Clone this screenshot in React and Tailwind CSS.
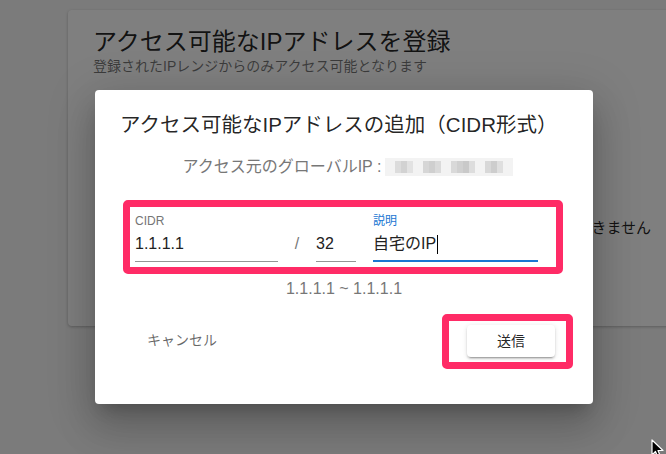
import React from "react";

const FONT = { fontFamily: '"Liberation Sans", "Noto Sans CJK JP", sans-serif' };

function Mosaic() {
  const groups = [
    ["#dcdcdc", "#d2d2d2", "#e2e2e2"],
    ["#d6d6d6", "#cfcfcf", "#dadada"],
    ["#d9d9d9", "#d0d0d0", "#c9c9c9", "#dddddd"],
    ["#d8d8d8", "#cdcdcd", "#dfdfdf"],
  ];
  return (
    <div className="flex h-[18px] items-stretch bg-[#f3f3f3] px-[10px] gap-[10px]">
      {groups.map((g, i) => (
        <div key={i} className="flex items-stretch py-[3px]">
          {g.map((c, j) => (
            <div key={j} className="w-[6px]" style={{ backgroundColor: c }} />
          ))}
        </div>
      ))}
    </div>
  );
}

export default function App() {
  return (
    <div
      className="relative w-[666px] h-[454px] overflow-hidden bg-[#f6f6f6]"
      style={FONT}
    >
      {/* background card */}
      <div className="ml-[68px] mt-[10px] w-[620px] h-[316px] bg-white rounded-[4px] shadow-[0_1px_3px_rgba(0,0,0,0.25)] pl-[25px] pt-[17px]">
        <div className="text-[24px] leading-[30px] text-black/[0.87]">
          アクセス可能なIPアドレスを登録
        </div>
        <div className="text-[14px] leading-[20px] text-black/[0.54] mt-[-1px]">
          登録されたIPレンジからのみアクセス可能となります
        </div>
        <div className="flex justify-end pr-[37px] mt-[142px] text-[15px] leading-[20px] text-black/[0.87]">
          アクセスできません
        </div>
      </div>

      {/* overlay */}
      <div className="absolute inset-0 bg-black/50" />

      {/* dialog */}
      <div className="absolute left-[95px] top-[90px] w-[498px] h-[314px] bg-white rounded-[4px] shadow-[0_11px_15px_-7px_rgba(0,0,0,0.2),0_24px_38px_3px_rgba(0,0,0,0.14),0_9px_46px_8px_rgba(0,0,0,0.12)] flex flex-col">
        <div className="pt-[19px] px-[25px] text-[20.5px] leading-[32px] text-black/[0.87] whitespace-nowrap">
          アクセス可能なIPアドレスの追加（CIDR形式）
        </div>

        <div className="mt-[14px] flex justify-center items-center h-[24px] text-[16px] text-[#777] pl-[8px]">
          <span>アクセス元のグローバルIP : </span>
          <span className="ml-[4px]">
            <Mosaic />
          </span>
        </div>

        {/* highlighted form */}
        <div className="mt-[21px] ml-[28px] w-[440px] border-[7px] border-[#ff2b66] rounded-[5px] pl-[5px] pt-[6px] pb-[5px] flex">
          <div className="w-[143px] flex flex-col">
            <div className="h-[16px] leading-[16px] text-[12px] text-[#757575]">CIDR</div>
            <div className="mt-[3px] h-[24px] leading-[24px] text-[16px] text-[#222]">1.1.1.1</div>
            <div className="h-[5px]" />
            <div className="h-[1px] bg-[#949494]" />
          </div>
          <div className="w-[38px] flex flex-col">
            <div className="h-[16px]" />
            <div className="mt-[3px] h-[24px] leading-[24px] text-[16px] text-[#777] text-center">/</div>
          </div>
          <div className="w-[40px] flex flex-col">
            <div className="h-[16px]" />
            <div className="mt-[3px] h-[24px] leading-[24px] text-[16px] text-[#222]">32</div>
            <div className="h-[5px]" />
            <div className="h-[1px] bg-[#949494]" />
          </div>
          <div className="w-[17px]" />
          <div className="w-[165px] flex flex-col">
            <div className="h-[16px] leading-[16px] text-[12px] text-[#1976d2]">説明</div>
            <div className="mt-[3px] h-[24px] leading-[24px] text-[16px] text-[#222] flex items-center">
              <span>自宅のIP</span>
              <span className="ml-[1px] w-[1px] h-[19px] bg-black" />
            </div>
            <div className="h-[4px]" />
            <div className="h-[2px] bg-[#1976d2]" />
          </div>
        </div>

        <div className="mt-[5px] h-[20px] leading-[20px] text-center text-[16px] text-[#777]">
          1.1.1.1 ~ 1.1.1.1
        </div>

        {/* actions */}
        <div className="mt-[15px] flex items-center justify-between pl-[52px] pr-[20px]">
          <span className="text-[14px] text-black/[0.6] mt-[-2px]">キャンセル</span>
          <div className="border-[7px] border-[#ff2b66] rounded-[5px] pl-[18px] pr-[11px] pt-[4px] pb-[5px]">
            <div className="w-[88px] h-[32px] rounded-[4px] bg-white flex items-center justify-center text-[14px] text-black/[0.87] shadow-[0_3px_1px_-2px_rgba(0,0,0,0.2),0_2px_2px_0_rgba(0,0,0,0.14),0_1px_5px_0_rgba(0,0,0,0.12)]">
              送信
            </div>
          </div>
        </div>
      </div>

      {/* mouse cursor */}
      <svg
        className="absolute left-[651px] top-[439px]"
        width="14"
        height="20"
        viewBox="0 0 14 20"
      >
        <path
          d="M1 1 L1 16 L4.5 12.5 L7 18.5 L9.5 17.5 L7 11.5 L12 11.5 Z"
          fill="#000"
          stroke="#fff"
          strokeWidth="1.2"
          strokeLinejoin="round"
        />
      </svg>
    </div>
  );
}
